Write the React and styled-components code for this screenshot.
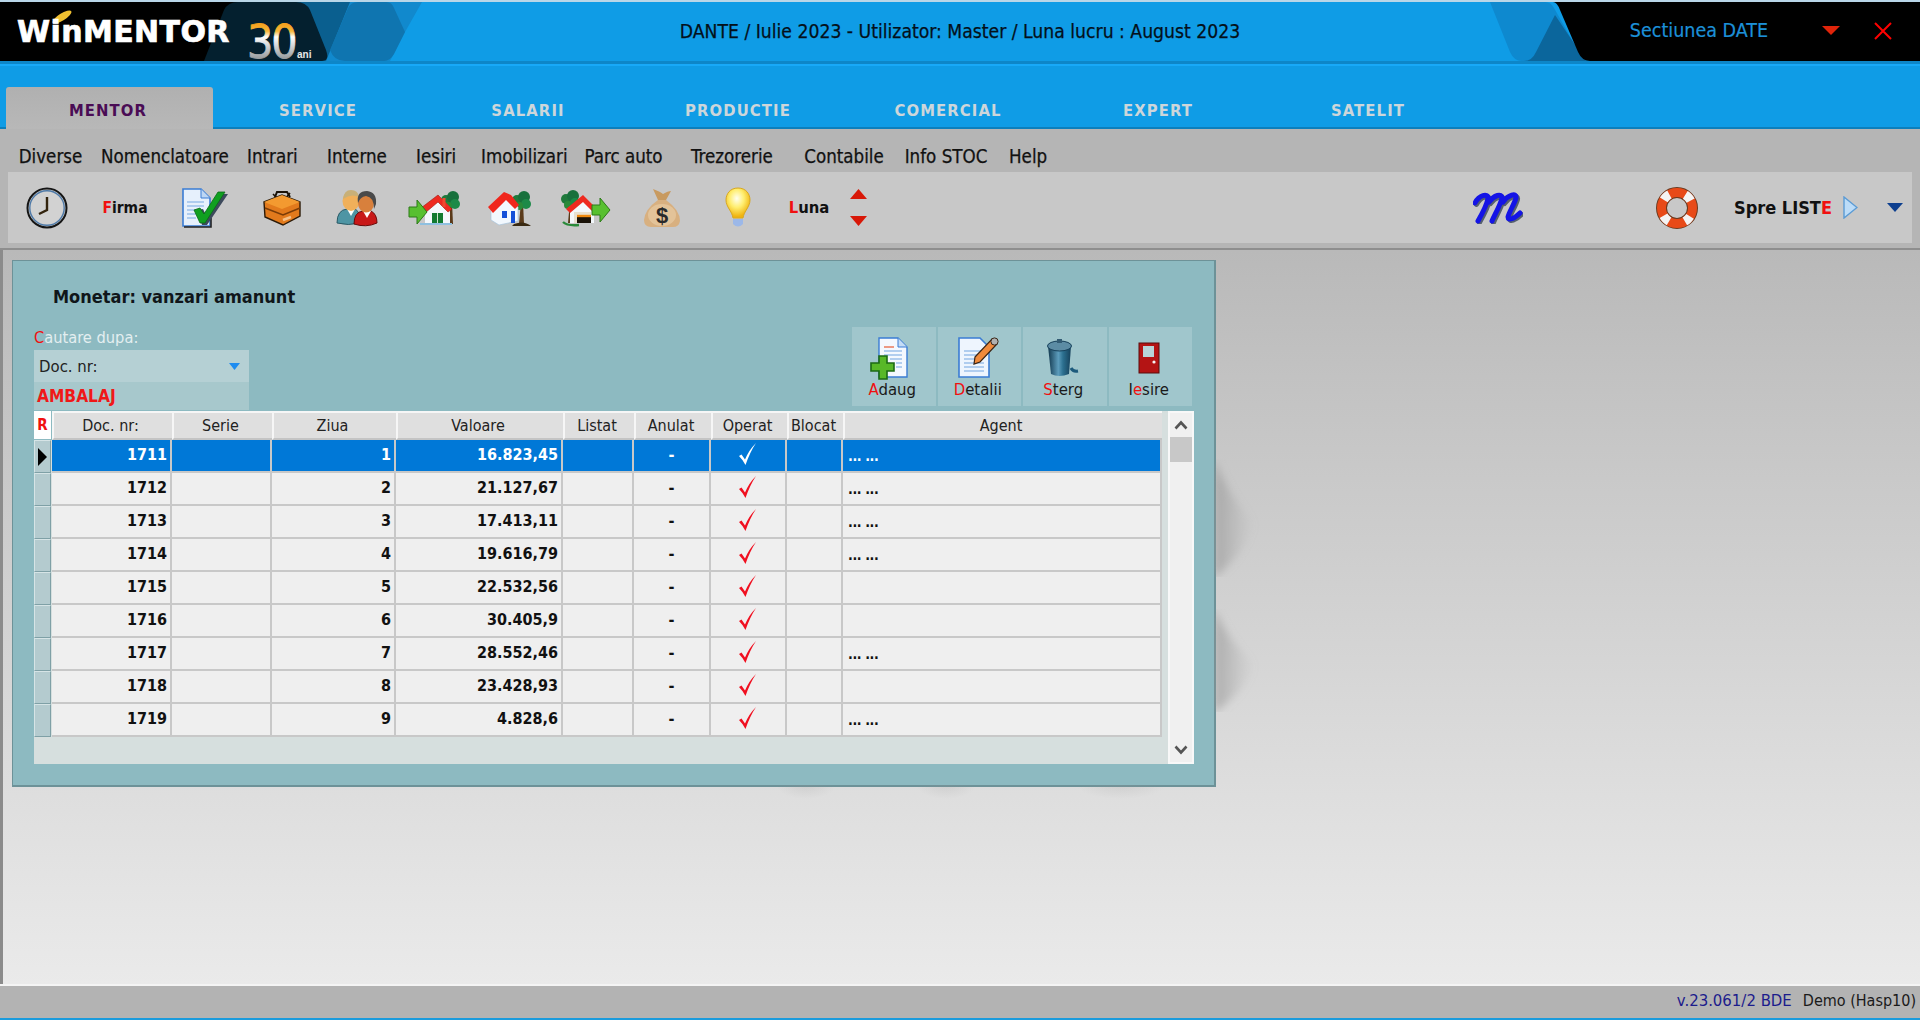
import React from 'react';
import styled, { createGlobalStyle } from 'styled-components';

const FONT = `"DejaVu Sans Condensed", "DejaVu Sans", sans-serif`;

const GlobalStyle = createGlobalStyle`
  html, body { margin: 0; padding: 0; background: #e8e8e8; }
  body { font-family: ${FONT}; font-stretch: condensed; font-size: 16px; color: #111; overflow: hidden; }
`;

const Page = styled.div`
  width: 1920px;
  height: 1020px;
  display: flex;
  flex-direction: column;
  overflow: hidden;
`;

const TitleBar = styled.header`
  position: relative;
  height: 59px;
  border-top: 2px solid #b9d6e8;
  background: #0f9ce6;
  display: grid;
  grid-template-columns: 1fr auto 1fr;
  align-items: center;
`;

const Deco = styled.svg`
  position: absolute;
  left: 0;
  top: 0;
`;

const Brand = styled.div`
  position: relative;
  padding: 0 0 0 17px;
  font-family: "DejaVu Sans", sans-serif;
  font-stretch: normal;
  font-weight: 700;
  font-size: 30px;
  letter-spacing: 0.4px;
  color: #fff;
  line-height: 36px;
  -webkit-text-stroke: 0.7px #fff;
`;

const TitleText = styled.div`
  position: relative;
  color: #04101a;
  font-size: 19.2px;
  line-height: 24px;
  -webkit-text-stroke: 0.25px #04101a;
`;

const TitleRight = styled.div`
  position: relative;
  display: flex;
  justify-content: flex-end;
  align-items: center;
  padding-right: 28px;
  margin-top: -2px;
`;

const Section = styled.span`
  color: #1c90d8;
  font-size: 19.5px;
  -webkit-text-stroke: 0.2px #1c90d8;
  margin-right: 54px;
`;

const WinButton = styled.svg`
  display: block;
  margin-left: ${(p) => p.$gap || 0}px;
`;

const BlueBar = styled.div`
  background: #0f9ce6;
  border-top: 3px solid #0d86c8;
  height: 68px;
  box-sizing: border-box;
  display: flex;
  flex-direction: column;
  justify-content: flex-end;
  box-shadow: inset 0 2px 0 #18a9f8, inset 0 -2px 0 #0c7fbc;
`;

const Tabs = styled.nav`
  display: flex;
  padding-left: 6px;
  height: 42px;
`;

const Tab = styled.div`
  width: ${(p) => (p.$active ? 207 : 210)}px;
  box-sizing: border-box;
  padding: ${(p) => (p.$active ? '5px 3px 0 0' : '5px 0 0')};
  display: flex;
  align-items: center;
  justify-content: center;
  font-weight: 700;
  font-size: 16.5px;
  letter-spacing: 1.1px;
  color: ${(p) => (p.$active ? '#4a0c55' : '#cdd6da')};
  background: ${(p) => (p.$active ? 'linear-gradient(#b0b0b0, #b8b8b8)' : 'transparent')};
  border-radius: ${(p) => (p.$active ? '3px 3px 0 0' : '0')};
  position: relative;
  z-index: 1;
`;

const MenuBar = styled.nav`
  height: 43px;
  background: #b5b5b5;
  display: flex;
  align-items: center;
  padding-top: 11px;
  box-sizing: border-box;
`;

const MenuItem = styled.span`
  margin-left: ${(p) => p.$gap}px;
  color: #111;
  font-size: 18.6px;
  -webkit-text-stroke: 0.25px #111;
  white-space: nowrap;
  width: ${(p) => p.$w}px;
  text-align: center;
`;

const ToolbarWrap = styled.div`
  background: #b5b5b5;
  padding: 0 8px 5px 8px;
  border-bottom: 2px solid #8e8e8e;
`;

const Toolbar = styled.div`
  height: 71px;
  background: #c8c8c8;
  display: flex;
  align-items: center;
`;

const ToolCell = styled.div`
  flex: 0 0 ${(p) => p.$w}px;
  display: flex;
  align-items: center;
  justify-content: center;
  white-space: nowrap;
`;

const ArrowStack = styled.div`
  flex: 0 0 32px;
  display: flex;
  flex-direction: column;
  align-items: center;
  gap: 17px;
`;

const Spacer = styled.div`
  flex: ${(p) => (p.$w ? `0 0 ${p.$w}px` : '1')};
`;

const ToolLabel = styled.span`
  font-weight: 700;
  font-size: ${(p) => p.$size || 15.5}px;
  color: #111;
`;

const Hot = styled.span`
  color: #f01010;
`;

const Main = styled.main`
  flex: 1;
  position: relative;
  border-left: 3px solid #8b8b8b;
  padding: 10px 0 0 9px;
  background: linear-gradient(#b9b9b9 0%, #c6c6c6 25%, #dcdcdc 70%, #eaeaea 100%);
`;

const Panel = styled.section`
  position: relative;
  width: 1204px;
  height: 527px;
  box-sizing: border-box;
  background: #8dbac1;
  border: 1px solid #6d9298;
  border-width: 1px 2px 2px 1px;
  padding: 0 20px 0 21px;
`;

const Swoosh = styled.svg`
  position: absolute;
  left: 100%;
  top: ${(p) => p.$top}px;
`;

const Smudge = styled.div`
  position: absolute;
  top: 100%;
  left: ${(p) => p.$left}px;
  width: ${(p) => p.$w}px;
  height: 14px;
  background: radial-gradient(ellipse at 50% 0%, rgba(150, 150, 150, 0.2), rgba(150, 150, 150, 0) 70%);
`;

const PanelTitle = styled.h1`
  margin: 0;
  padding: 25px 0 0 19px;
  font-size: 18px;
  line-height: 22px;
  font-weight: 700;
  color: #10161a;
`;

const TopRow = styled.div`
  height: 103px;
  display: flex;
  justify-content: space-between;
  align-items: flex-end;
`;

const SearchBox = styled.div`
  width: 215px;
  padding-bottom: 1px;
`;

const SearchLabel = styled.div`
  font-size: 16.3px;
  line-height: 18px;
  color: #e3eef0;
  margin-bottom: 3px;
`;

const Combo = styled.div`
  height: 32px;
  background: #b5d0d4;
  display: flex;
  align-items: center;
  justify-content: space-between;
  padding: 0 9px 0 5px;
  font-size: 16.6px;
  color: #222;
`;

const Ambalaj = styled.div`
  height: 28px;
  background: #a7c8cc;
  padding-left: 3px;
  display: flex;
  align-items: center;
  font-size: 17.2px;
  font-weight: 700;
  color: #f01818;
`;

const ActionGroup = styled.div`
  display: flex;
  gap: 2px;
  margin: 0 2px 5px 0;
`;

const ActionButton = styled.div`
  width: 83.5px;
  height: 79px;
  background: #a0c6cc;
  display: flex;
  flex-direction: column;
  align-items: center;
  box-sizing: border-box;
  padding: 8px 3px 0 0;
  font-size: 16.6px;
  color: #1a1a1a;
  line-height: 18px;
`;

const IconBox = styled.div`
  height: 46px;
  display: flex;
  align-items: center;
  justify-content: center;
`;

const GridArea = styled.div`
  display: flex;
  height: 353px;
`;

const Table = styled.div`
  width: 1134px;
  background: #d6dfde;
`;

const COLS = '18px 120px 100px 124px 167px 71px 77px 76px 56px 319px';

const HeaderRow = styled.div`
  display: grid;
  grid-template-columns: ${COLS};
  height: 29px;
  width: 1128px;
  background: #8dbac1;
`;

const HeaderCell = styled.div`
  box-sizing: border-box;
  background: #dfdfdf;
  border-top: 2px solid #f6f6f6;
  border-left: 2px solid #f6f6f6;
  border-bottom: 2px solid #c4c4c4;
  display: flex;
  align-items: center;
  justify-content: center;
  padding-right: 5px;
  font-size: 16px;
  color: #222;
  white-space: nowrap;
`;

const RecordHead = styled.div`
  background: #fff;
  color: #f01010;
  font-weight: 700;
  font-size: 15px;
  display: flex;
  align-items: center;
  justify-content: center;
  height: 28px;
  width: 17px;
`;

const Row = styled.div`
  display: grid;
  grid-template-columns: ${COLS};
  height: 33px;
  width: 1128px;
`;

const Indicator = styled.div`
  width: 17px;
  box-sizing: border-box;
  background: #b4cbcf;
  border: 1px solid #7fa0a6;
  border-top-color: #d6e4e6;
  border-left-color: #d6e4e6;
  display: flex;
  align-items: center;
  justify-content: center;
`;

const Cell = styled.div`
  box-sizing: border-box;
  background: ${(p) => (p.$selected ? '#0078d7' : '#efefef')};
  color: ${(p) => (p.$selected ? '#fff' : '#111')};
  border-right: 2px solid #c8c8c8;
  border-bottom: 2px solid #c8c8c8;
  display: flex;
  align-items: center;
  justify-content: ${(p) => p.$align || 'flex-end'};
  padding: 0 3px 3px 3px;
  font-size: 16px;
  font-weight: 700;
`;

const Dots = styled.span`
  font-size: 14px;
  letter-spacing: -0.4px;
  padding: 4px 0 0 2px;
`;

const Scroll = styled.div`
  width: 26px;
  margin-left: 0;
  box-sizing: border-box;
  background: #f0f0f0;
  border: 2px solid #f8f8f8;
  display: flex;
  flex-direction: column;
  align-items: center;
`;

const ScrollButton = styled.div`
  height: 24px;
  display: flex;
  align-items: center;
  justify-content: center;
`;

const Thumb = styled.div`
  width: 22px;
  height: 25px;
  background: #c8c8c8;
  flex: none;
`;

const ScrollRest = styled.div`
  flex: 1;
`;

const StatusBar = styled.footer`
  height: 36px;
  box-sizing: border-box;
  background: #b3b3b3;
  border-top: 2px solid #f4f4f4;
  border-bottom: 2px solid #1a9bdc;
  display: flex;
  justify-content: flex-end;
  align-items: center;
  padding: 0 4px 4px 0;
`;

const Version = styled.span`
  color: #1c1c8c;
  font-size: 16.6px;
  margin-right: 11px;
`;

const Licence = styled.span`
  color: #1a1a1a;
  font-size: 16px;
`;

const tabs = ['MENTOR', 'SERVICE', 'SALARII', 'PRODUCTIE', 'COMERCIAL', 'EXPERT', 'SATELIT'];

const menu = [
  ['Diverse', 18, 65], ['Nomenclatoare', 18, 128], ['Intrari', 18, 49], ['Interne', 31, 59],
  ['Iesiri', 30, 40], ['Imobilizari', 25, 83], ['Parc auto', 19, 81], ['Trezorerie', 26, 84],
  ['Contabile', 30, 80], ['Info STOC', 18, 88], ['Help', 19, 38],
];

const heads = ['Doc. nr:', 'Serie', 'Ziua', 'Valoare', 'Listat', 'Anulat', 'Operat', 'Blocat', 'Agent'];

const rows = [
  ['1711', '1', '16.823,45', true],
  ['1712', '2', '21.127,67', true],
  ['1713', '3', '17.413,11', true],
  ['1714', '4', '19.616,79', true],
  ['1715', '5', '22.532,56', false],
  ['1716', '6', '30.405,9', false],
  ['1717', '7', '28.552,46', true],
  ['1718', '8', '23.428,93', false],
  ['1719', '9', '4.828,6', true],
];

function TitleDeco() {
  return (
    <Deco width="1920" height="59" viewBox="0 2 1920 59">
      <defs>
        <linearGradient id="thirty" gradientUnits="userSpaceOnUse" x1="0" y1="24" x2="0" y2="60">
          <stop offset="0" stopColor="#f5a01c" />
          <stop offset="0.2" stopColor="#f5b83c" />
          <stop offset="0.36" stopColor="#ffffff" />
          <stop offset="1" stopColor="#8f9498" />
        </linearGradient>
      </defs>
      <path d="M300 2 H422 L405 32 L390 61 H320 Z" fill="#1189cd" />
      <path d="M296 2 H350 L326 61 H310 Z" fill="#0a5f8f" />
      <path d="M348 8 Q351 2 358 2 H386 Q392 2 394 8 L405 32 L394 54 Q390 61 384 61 H345 Q334 61 330 50 Z" fill="#0f75b0" />
      <path d="M0 2 H240 V61 H0 Z" fill="#000" />
      <path d="M204 61 L224 10 Q228 2 238 2 H296 Q306 2 310 10 L326 50 Q330 61 322 61 Z" fill="#04202f" />
      <ellipse cx="62" cy="17" rx="11" ry="3.6" transform="rotate(-32 62 17)" fill="#f0c030" />
      <text x="247" y="58" fontFamily="DejaVu Sans, sans-serif" fontSize="46" fill="url(#thirty)" stroke="url(#thirty)" strokeWidth="0.8" letterSpacing="-2">30</text>
      <text x="297" y="58" fontFamily="Liberation Sans, sans-serif" fontWeight="700" fontSize="10" fill="#e8e8e8">ani</text>
      <path d="M1490 2 H1545 Q1551 2 1554 8 L1584 61 H1522 Q1514 61 1510 52 Z" fill="#0e89cf" />
      <path d="M1555 15 L1536 52 Q1532 61 1524 61 H1586 Z" fill="#0b669c" />
      <path d="M1553 2 Q1557 2 1560 10 L1578 52 Q1582 61 1590 61 H1920 V2 Z" fill="#000" />
    </Deco>
  );
}

function ClockIcon() {
  return (
    <svg width="42" height="42" viewBox="0 0 42 42">
      <circle cx="21" cy="21" r="19.5" fill="#c8c8c8" stroke="#151515" strokeWidth="2" />
      <circle cx="21" cy="21" r="17.2" fill="#d2d2d2" stroke="#4f7aa8" strokeWidth="1.4" />
      <path d="M21 10 V23 L13 27" fill="none" stroke="#33240e" strokeWidth="2.4" />
    </svg>
  );
}

function CheckDocIcon() {
  return (
    <svg width="46" height="40" viewBox="0 0 46 40">
      <path d="M1 1 H19 L28 10 V38 H1 Z" fill="#e6f0fc" stroke="#3a7cd4" strokeWidth="1.6" />
      <path d="M19 1 V10 H28" fill="#bcd6f4" stroke="#3a7cd4" />
      <path d="M5 14 H22 M5 18 H22 M5 22 H16 M5 26 H14 M5 30 H14" stroke="#9cc0ea" strokeWidth="1.4" />
      <path d="M2 39 H29 V30" fill="none" stroke="#222" strokeWidth="1.6" />
      <path d="M15 22 L21 21 L24 27 L38 6 L46 6 L25 37 L20 37 Z" fill="#3d4a5c" />
      <path d="M12 22 L18 20 L22 26 L36 4 L43 4 L23 35 L18 35 Z" fill="#10a020" stroke="#0a6a18" strokeWidth="0.8" />
    </svg>
  );
}

function ToolboxIcon() {
  return (
    <svg width="38" height="36" viewBox="0 0 38 36">
      <path d="M12 7 L14 2 L24 2 L27 7" fill="none" stroke="#1a1208" strokeWidth="2" />
      <path d="M10 4 L15 9 M27 3 L22 9" stroke="#1a1208" strokeWidth="1.6" />
      <path d="M1 12 L19 5 L37 12 L37 26 L20 35 L2 27 Z" fill="#e27a1c" stroke="#2b1a08" strokeWidth="1.4" />
      <path d="M1 12 L19 19 L37 12 L19 5 Z" fill="#f39a30" />
      <path d="M2 18 L20 25 L37 18" fill="none" stroke="#7a3c08" strokeWidth="1.6" />
      <path d="M20 30 L28 27" stroke="#f5c088" strokeWidth="2.6" />
    </svg>
  );
}

function PeopleIcon() {
  return (
    <svg width="42" height="38" viewBox="0 0 42 38">
      <path d="M1 34 Q1 21 11 20 L19 20 Q24 22 24 34 Q12 37 1 34 Z" fill="#4e95a4" stroke="#2b5a66" />
      <path d="M11 20 L15 27 L19 20 Z" fill="#fff" />
      <ellipse cx="15" cy="12" rx="8.5" ry="10" fill="#f0b05a" />
      <path d="M7 10 Q8 1 15 1 Q22 1 23 8 Q15 4 7 10 Z" fill="#c8b078" />
      <path d="M18 35 Q18 23 27 22 L35 22 Q41 25 41 34 Q30 39 18 35 Z" fill="#c81818" stroke="#6a0a0a" />
      <path d="M27 22 L31 29 L35 22 Z" fill="#fff" />
      <ellipse cx="30" cy="14" rx="8" ry="9.5" fill="#d8803c" />
      <path d="M22 14 Q20 2 31 2 Q41 3 40 15 L38 20 Q38 8 30 7 Q24 8 22 14 Z" fill="#4a4a4a" />
    </svg>
  );
}

function GreenArrow({ x, y }) {
  const d = `M${x + 8} ${y} L${x + 18} ${y + 12} L${x + 8} ${y + 24} V${y + 17} H${x} V${y + 7} H${x + 8} Z`;
  return <path d={d} fill="#58c030" stroke="#2c7a18" strokeWidth="1" />;
}

function Tree({ x, y }) {
  return (
    <g>
      <path d={`M${x + 8} ${y + 12} L${x + 6} ${y + 34} H${x + 11} L${x + 10} ${y + 12} Z`} fill="#5a3a1a" />
      <circle cx={x + 4} cy={y + 10} r="5" fill="#1f7a3c" />
      <circle cx={x + 11} cy={y + 7} r="6" fill="#18703c" />
      <circle cx={x + 13} cy={y + 14} r="5" fill="#1c8a48" />
      <circle cx={x + 6} cy={y + 16} r="4" fill="#2a8a3a" />
    </g>
  );
}

function HouseLeftIcon() {
  return (
    <svg width="52" height="38" viewBox="0 0 52 38">
      <Tree x={34} y={1} />
      <path d="M17 17 L31 7 L42 18 V34 H17 Z" fill="#f4f8fc" />
      <path d="M13 19 L30 6 L44 20 L40 23 L30 13 L17 24 Z" fill="#ee2a20" stroke="#a01810" strokeWidth="0.6" />
      <path d="M36 9 V18" stroke="#f04a30" strokeWidth="3" />
      <rect x="24" y="24" width="11" height="10" fill="#127a30" />
      <path d="M29.5 24 V34" stroke="#cfe8d0" />
      <path d="M12 35 H44" stroke="#8fc0e0" strokeWidth="2" />
      <GreenArrow x={1} y={11} />
    </svg>
  );
}

function HouseIcon() {
  return (
    <svg width="44" height="38" viewBox="0 0 44 38">
      <Tree x={25} y={1} />
      <path d="M3 19 L20 9 L30 18 V32 L11 36 L3 31 Z" fill="#f2f8fe" stroke="#a8c4dc" strokeWidth="0.7" />
      <path d="M0 18 L16 3 L23 6 L31 16 L27 20 L18 11 L5 24 Z" fill="#f0261c" />
      <rect x="14" y="22" width="5" height="7" fill="#1450d8" />
      <rect x="23" y="22" width="4" height="12" fill="#1450d8" />
      <path d="M26 35 Q36 31 43 37 H24 Z" fill="#3a2a12" />
    </svg>
  );
}

function HouseRightIcon() {
  return (
    <svg width="50" height="38" viewBox="0 0 50 38">
      <Tree x={1} y={0} />
      <path d="M9 20 L22 9 L33 20 V34 H9 Z" fill="#f4f8fc" />
      <path d="M5 20 L22 6 L34 18 L31 22 L22 13 L9 24 Z" fill="#ee2a20" />
      <path d="M13 23 L30 23 V34 H13 Z" fill="#e8e0d0" />
      <rect x="16" y="26" width="14" height="8" fill="#1a1208" />
      <path d="M16 27 H30" stroke="#f08a10" strokeWidth="2.4" />
      <path d="M2 33 Q6 37 18 36" fill="none" stroke="#2a8a3a" strokeWidth="2.4" />
      <GreenArrow x={31} y={9} />
    </svg>
  );
}

function MoneyIcon() {
  return (
    <svg width="38" height="40" viewBox="0 0 38 40">
      <path d="M10 1 Q18 4 20 6 Q25 3 28 3 L23 12 L15 12 Z" fill="#c89a60" />
      <path d="M15 12 L23 12 Q37 22 37 33 Q36 39 30 39 H8 Q1 39 1 32 Q2 21 15 12 Z" fill="#d8b080" />
      <ellipse cx="19" cy="27" rx="14" ry="11" fill="#e8cca4" opacity="0.7" />
      <text x="19" y="35" textAnchor="middle" fontFamily="Liberation Sans, sans-serif" fontWeight="700" fontSize="22" fill="#2a2a2a">$</text>
    </svg>
  );
}

function BulbIcon() {
  return (
    <svg width="26" height="42" viewBox="0 0 26 42">
      <defs>
        <radialGradient id="bulb" cx="0.45" cy="0.35" r="0.6">
          <stop offset="0" stopColor="#fffff0" />
          <stop offset="0.5" stopColor="#ffee70" />
          <stop offset="1" stopColor="#f0b410" />
        </radialGradient>
      </defs>
      <path d="M13 1 C21 1 25 7 25 13 C25 20 19 24 18 31 H8 C7 24 1 20 1 13 C1 7 5 1 13 1 Z" fill="url(#bulb)" stroke="#d8a820" />
      <path d="M8 32 H18 V37 Q13 42 8 37 Z" fill="#9cb8e8" />
    </svg>
  );
}

function Triangle({ up, color = '#d81808', w = 17, h = 10 }) {
  return (
    <svg width={w} height={h} viewBox={`0 0 ${w} ${h}`}>
      <path d={up ? `M${w / 2} 0 L${w} ${h} H0 Z` : `M0 0 H${w} L${w / 2} ${h} Z`} fill={color} />
    </svg>
  );
}

function ScriptM() {
  return (
    <svg width="50" height="32" viewBox="0 0 50 32">
      <g fill="none" strokeLinecap="round" strokeWidth="5">
        <path d="M2 11 C6 3 15 1 15 6 C14 13 9 22 5 29 M16 10 C21 3 29 1 29 6 C27 14 22 22 19 29 M30 10 C35 3 44 0 43 6 C41 13 36 20 35 25 C35 29 41 27 47 21" stroke="#55606f" transform="translate(1.5 1.5)" />
        <path d="M2 11 C6 3 15 1 15 6 C14 13 9 22 5 29 M16 10 C21 3 29 1 29 6 C27 14 22 22 19 29 M30 10 C35 3 44 0 43 6 C41 13 36 20 35 25 C35 29 41 27 47 21" stroke="#1414e6" />
      </g>
    </svg>
  );
}

function RingIcon() {
  return (
    <svg width="42" height="42" viewBox="0 0 42 42">
      <circle cx="21" cy="21" r="15.5" fill="none" stroke="#6a3a20" strokeWidth="11" />
      <circle cx="21" cy="21" r="15.5" fill="none" stroke="#e84a18" strokeWidth="9" />
      <g stroke="#f4f4f4" strokeWidth="9" fill="none" strokeDasharray="8 16.35" strokeDashoffset="4" transform="rotate(45 21 21)">
        <circle cx="21" cy="21" r="15.5" />
      </g>
    </svg>
  );
}

function ChevronRight() {
  return (
    <svg width="15" height="23" viewBox="0 0 15 23">
      <path d="M1 1 L14 11.5 L1 22 Z" fill="#bcdcf8" stroke="#5b9bd5" strokeWidth="1.4" />
    </svg>
  );
}

function AddIcon() {
  return (
    <svg width="44" height="44" viewBox="0 0 44 44">
      <path d="M9 2 H28 L37 11 V41 H9 Z" fill="#f4f8fe" stroke="#3a7cd4" strokeWidth="1.4" />
      <path d="M28 2 V11 H37" fill="#c4dcf6" stroke="#3a7cd4" />
      <path d="M14 11 H24" stroke="#e87050" strokeWidth="1.4" />
      <path d="M14 15 H32 M14 19 H32 M20 23 H32 M26 27 H32 M26 31 H32" stroke="#9cc0ea" strokeWidth="1.3" />
      <path d="M9 20 H17 V27 H24 V35 H17 V43 H9 V35 H1 V27 H9 Z" fill="#58b828" stroke="#1c6a14" strokeWidth="1.6" />
    </svg>
  );
}

function DetailsIcon() {
  return (
    <svg width="44" height="44" viewBox="0 0 44 44">
      <path d="M3 2 H24 L33 11 V41 H3 Z" fill="#eef5fe" stroke="#3a7cd4" strokeWidth="1.6" />
      <path d="M8 15 H28 M8 19 H28 M8 23 H22 M8 27 H28 M8 31 H28 M8 35 H28" stroke="#9cc0ea" strokeWidth="1.3" />
      <path d="M19 21 L36 3 L41 8 L24 26 L18 28 Z" fill="#f08a3c" stroke="#3a2414" strokeWidth="1.2" />
      <circle cx="38.5" cy="5.5" r="3.6" fill="#b0b0b0" stroke="#3a2414" />
    </svg>
  );
}

function BinIcon() {
  return (
    <svg width="36" height="40" viewBox="0 0 36 40">
      <defs>
        <linearGradient id="bin" x1="0" y1="0" x2="1" y2="0">
          <stop offset="0" stopColor="#12384e" />
          <stop offset="0.45" stopColor="#5c9cbc" />
          <stop offset="0.65" stopColor="#2c7090" />
          <stop offset="1" stopColor="#16405a" />
        </linearGradient>
      </defs>
      <path d="M26 30 Q28 34 33 33" fill="none" stroke="#1c5a7c" strokeWidth="3" />
      <path d="M3 8 H26 L24 36 Q14 40 6 36 Z" fill="url(#bin)" />
      <ellipse cx="14.5" cy="8" rx="12" ry="5" fill="#5c8ca4" stroke="#16405a" />
      <rect x="12" y="1" width="5" height="4" fill="#335c74" />
    </svg>
  );
}

function DoorIcon() {
  return (
    <svg width="22" height="32" viewBox="0 0 22 32">
      <rect x="1" y="1" width="20" height="30" fill="#b41414" stroke="#5a0c0c" />
      <rect x="5" y="4" width="11" height="11" fill="#b8d4d8" />
      <circle cx="16" cy="20" r="1.6" fill="#f4f4f4" />
    </svg>
  );
}

function Tick({ color }) {
  return (
    <svg width="18" height="23" viewBox="0 0 18 23">
      <path d="M0 13 L2.5 11.5 L6 16.5 Q10 7 17 0 Q11 9 6.5 22 Q4 17 0 13 Z" fill={color} />
    </svg>
  );
}

function Swoop({ top, height }) {
  const id = `sw${top}`;
  return (
    <Swoosh $top={top} width="46" height={height} viewBox={`0 0 46 ${height}`}>
      <defs>
        <linearGradient id={id} x1="0" y1="0" x2="1" y2="0">
          <stop offset="0" stopColor="#8f8f8f" stopOpacity="0.6" />
          <stop offset="1" stopColor="#a0a0a0" stopOpacity="0" />
        </linearGradient>
        <filter id={`${id}b`} x="-30%" y="-10%" width="160%" height="120%">
          <feGaussianBlur stdDeviation="4" />
        </filter>
      </defs>
      <path d={`M0 0 Q14 ${height * 0.3} 40 ${height * 0.55} Q26 ${height * 0.85} 0 ${height} Z`} fill={`url(#${id})`} filter={`url(#${id}b)`} />
    </Swoosh>
  );
}

function ActionLabel({ hot, rest, inner }) {
  return <span>{inner}<Hot>{hot}</Hot>{rest}</span>;
}

export default function App() {
  return (
    <Page>
      <GlobalStyle />
      <TitleBar>
        <TitleDeco />
        <Brand>WinMENTOR</Brand>
        <TitleText>DANTE / Iulie 2023 - Utilizator: Master / Luna lucru : August 2023</TitleText>
        <TitleRight>
          <Section>Sectiunea DATE</Section>
          <Triangle color="#e0240a" w={18} h={9} />
          <WinButton $gap={34} width="18" height="18" viewBox="0 0 18 18">
            <path d="M1 1 L17 17 M17 1 L1 17" stroke="#f00" strokeWidth="2" />
          </WinButton>
        </TitleRight>
      </TitleBar>
      <BlueBar>
        <Tabs>
          {tabs.map((t, i) => (
            <Tab key={t} $active={i === 0}>{t}</Tab>
          ))}
        </Tabs>
      </BlueBar>
      <MenuBar>
        {menu.map(([name, gap, w]) => (
          <MenuItem key={name} $gap={gap} $w={w}>{name}</MenuItem>
        ))}
      </MenuBar>
      <ToolbarWrap>
        <Toolbar>
          <ToolCell $w={78}><ClockIcon /></ToolCell>
          <ToolCell $w={78}><ToolLabel><Hot>F</Hot>irma</ToolLabel></ToolCell>
          <ToolCell $w={82}><CheckDocIcon /></ToolCell>
          <ToolCell $w={72}><ToolboxIcon /></ToolCell>
          <ToolCell $w={78}><PeopleIcon /></ToolCell>
          <ToolCell $w={76}><HouseLeftIcon /></ToolCell>
          <ToolCell $w={76}><HouseIcon /></ToolCell>
          <ToolCell $w={76}><HouseRightIcon /></ToolCell>
          <ToolCell $w={76}><MoneyIcon /></ToolCell>
          <ToolCell $w={76}><BulbIcon /></ToolCell>
          <ToolCell $w={66}><ToolLabel $size={16.5}><Hot>L</Hot>una</ToolLabel></ToolCell>
          <ArrowStack>
            <Triangle up />
            <Triangle />
          </ArrowStack>
          <Spacer />
          <ToolCell $w={60}><ScriptM /></ToolCell>
          <Spacer $w={119} />
          <ToolCell $w={60}><RingIcon /></ToolCell>
          <Spacer $w={27} />
          <ToolCell $w={96}><ToolLabel $size={18}>Spre LIST<Hot>E</Hot></ToolLabel></ToolCell>
          <Spacer $w={6} />
          <ToolCell $w={24}><ChevronRight /></ToolCell>
          <Spacer $w={16} />
          <ToolCell $w={34}><Triangle color="#0d3f8f" w={16} h={9} /></ToolCell>
        </Toolbar>
      </ToolbarWrap>
      <Main>
        <Panel>
          <Swoop top={198} height={118} />
          <Swoop top={348} height={103} />
          <Smudge $left={763} $w={60} />
          <Smudge $left={903} $w={60} />
          <Smudge $left={1063} $w={90} />
          <PanelTitle>Monetar: vanzari amanunt</PanelTitle>
          <TopRow>
            <SearchBox>
              <SearchLabel><Hot>C</Hot>autare dupa:</SearchLabel>
              <Combo>
                Doc. nr:
                <Triangle color="#1e8cf0" w={11} h={7} />
              </Combo>
              <Ambalaj>AMBALAJ</Ambalaj>
            </SearchBox>
            <ActionGroup>
              <ActionButton>
                <IconBox><AddIcon /></IconBox>
                <ActionLabel hot="A" rest="daug" />
              </ActionButton>
              <ActionButton>
                <IconBox><DetailsIcon /></IconBox>
                <ActionLabel hot="D" rest="etalii" />
              </ActionButton>
              <ActionButton>
                <IconBox><BinIcon /></IconBox>
                <ActionLabel hot="S" rest="terg" />
              </ActionButton>
              <ActionButton>
                <IconBox><DoorIcon /></IconBox>
                <ActionLabel inner="I" hot="e" rest="sire" />
              </ActionButton>
            </ActionGroup>
          </TopRow>
          <GridArea>
            <Table>
              <HeaderRow>
                <RecordHead>R</RecordHead>
                {heads.map((h) => (
                  <HeaderCell key={h}>{h}</HeaderCell>
                ))}
              </HeaderRow>
              {rows.map(([doc, day, value, agent], i) => {
                const selected = i === 0;
                return (
                  <Row key={doc}>
                    <Indicator>
                      {selected && (
                        <svg width="9" height="18" viewBox="0 0 9 18">
                          <path d="M0 0 L9 9 L0 18 Z" fill="#000" />
                        </svg>
                      )}
                    </Indicator>
                    <Cell $selected={selected}>{doc}</Cell>
                    <Cell $selected={selected} />
                    <Cell $selected={selected}>{day}</Cell>
                    <Cell $selected={selected}>{value}</Cell>
                    <Cell $selected={selected} />
                    <Cell $selected={selected} $align="center">-</Cell>
                    <Cell $selected={selected} $align="center"><Tick color={selected ? '#fff' : '#f01020'} /></Cell>
                    <Cell $selected={selected} />
                    <Cell $selected={selected} $align="flex-start">{agent && <Dots>... ...</Dots>}</Cell>
                  </Row>
                );
              })}
            </Table>
            <Scroll>
              <ScrollButton>
                <svg width="14" height="10" viewBox="0 0 14 10">
                  <path d="M1.5 8.5 L7 2.5 L12.5 8.5" fill="none" stroke="#555" strokeWidth="2.6" />
                </svg>
              </ScrollButton>
              <Thumb />
              <ScrollRest />
              <ScrollButton>
                <svg width="14" height="10" viewBox="0 0 14 10">
                  <path d="M1.5 1.5 L7 7.5 L12.5 1.5" fill="none" stroke="#555" strokeWidth="2.6" />
                </svg>
              </ScrollButton>
            </Scroll>
          </GridArea>
        </Panel>
      </Main>
      <StatusBar>
        <Version>v.23.061/2 BDE</Version>
        <Licence>Demo (Hasp10)</Licence>
      </StatusBar>
    </Page>
  );
}
